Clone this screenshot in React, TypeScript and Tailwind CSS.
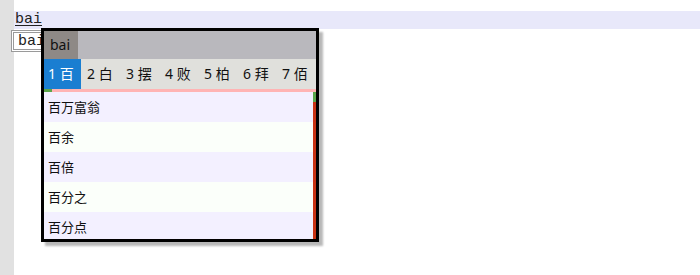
const candidates = ["1 百", "2 白", "3 摆", "4 败", "5 柏", "6 拜", "7 佰"];
const phrases = ["百万富翁", "百余", "百倍", "百分之", "百分点"];

const sans = "font-['Noto_Sans','Noto_Sans_CJK_SC',sans-serif]";

export default function App() {
  return (
    <div className="flex h-[275px] w-[700px] bg-white">
      <div className="w-[14px] shrink-0 bg-[#e1e1e1]" />
      <div className="relative flex-1 pt-[11px]">
        <div className="h-[18px] bg-[#e8e8fa] pl-[1px] font-['Liberation_Mono',monospace] text-[15px] leading-[18px] text-[#222]">
          <span className="underline underline-offset-2">bai</span>
        </div>
        <div className="ml-[-3px] mt-[1px] h-[22px] w-[36px] border border-[#9a9a9a] bg-white p-[1px]">
          <div className="h-full border border-[#9a9a9a] pl-[4px] font-['Liberation_Mono',monospace] text-[15px] leading-[17px] text-[#222]">
            bai
          </div>
        </div>

        <div
          className={`absolute left-[27px] top-[28px] w-[278px] border-[3px] border-black bg-white shadow-[4px_4px_2px_rgba(0,0,0,0.28)] ${sans}`}
        >
          <div className="flex h-[28px] bg-[#b9b8bd]">
            <div className="w-[34px] bg-[#8e8986] pl-[6px] text-[14px] leading-[28px] text-[#111]">bai</div>
          </div>
          <div className="flex h-[30px] bg-[#e0e0dc]">
            {candidates.map((c, i) => (
              <div
                key={c}
                className={`mr-[2px] w-[37px] shrink-0 whitespace-nowrap pl-[4px] text-[14px] leading-[30px] ${
                  i === 0 ? "bg-[#1a7ed1] text-white" : "text-[#111]"
                }`}
              >
                {c}
              </div>
            ))}
          </div>
          <div className="flex h-[3px] bg-[#ffb4b4]">
            <div className="w-[8px] bg-[#5aa64a]" />
          </div>
          <div className="flex">
            <div className="flex-1">
              {phrases.map((p, i) => (
                <div
                  key={p}
                  className={`pl-[4px] text-[13px] text-[#111] ${i === 4 ? "h-[27px] leading-[30px]" : "h-[30px] leading-[30px]"} ${
                    i % 2 === 0 ? "bg-[#f3f0ff]" : "bg-[#fbfffa]"
                  }`}
                >
                  {p}
                </div>
              ))}
            </div>
            <div className="flex w-[3px] flex-col">
              <div className="h-[10px] bg-[#5aa64a]" />
              <div className="flex-1 bg-[#c83214]" />
            </div>
          </div>
        </div>
      </div>
    </div>
  );
}
